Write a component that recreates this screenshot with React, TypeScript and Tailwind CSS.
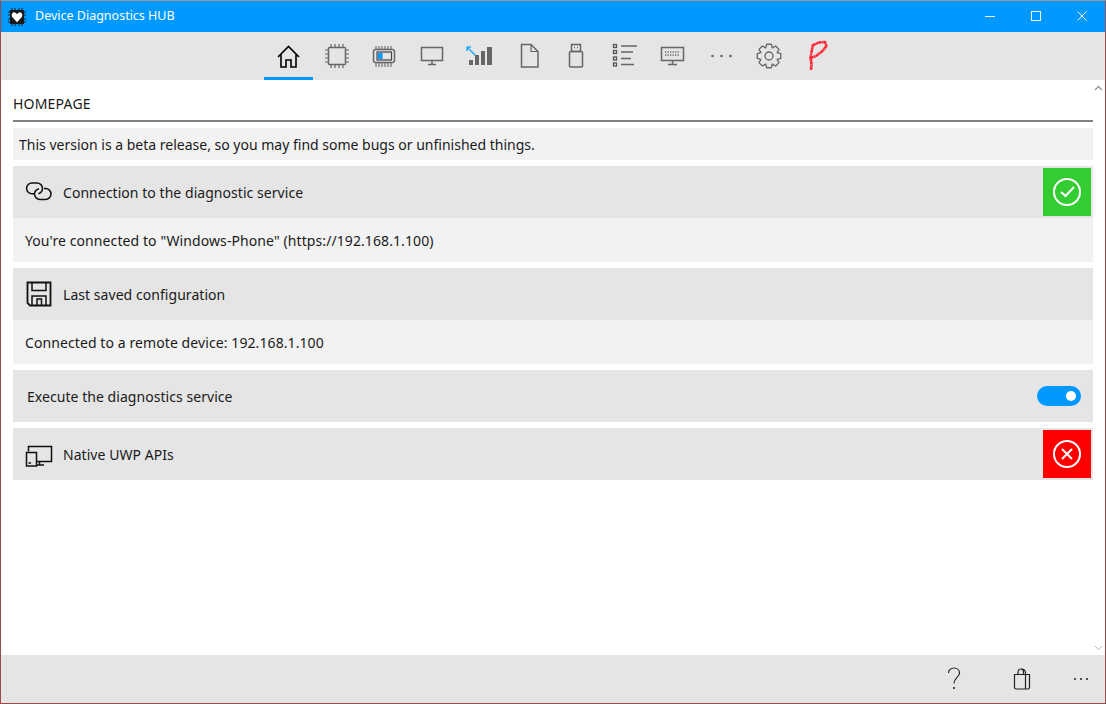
import type { ReactNode } from "react";

const font = "font-['Noto_Sans','Open_Sans',sans-serif]";

function gearPath(cx: number, cy: number) {
  const teeth = 8;
  const pts: string[] = [];
  for (let i = 0; i < teeth; i++) {
    const step = (Math.PI * 2) / teeth;
    const a = i * step - Math.PI / 2;
    const list: [number, number][] = [
      [a - 0.38, 8.8],
      [a - 0.2, 12],
      [a + 0.2, 12],
      [a + 0.38, 8.8],
    ];
    for (const [t, r] of list) {
      pts.push(`${(cx + Math.cos(t) * r).toFixed(2)} ${(cy + Math.sin(t) * r).toFixed(2)}`);
    }
  }
  return "M" + pts.join("L") + "Z";
}

function NavIcon({ children }: { children: ReactNode }) {
  return (
    <svg width="48" height="48" viewBox="0 0 48 48" fill="none" stroke="#666666" strokeWidth="1.5">
      {children}
    </svg>
  );
}

const navIcons: ReactNode[] = [
  <NavIcon key="home">
    <path d="M14 25L24.5 14.5L35 25" stroke="#000" strokeWidth="1.6" />
    <path d="M17 22.5V35H22V28H27V35H32V22.5" stroke="#000" strokeWidth="1.6" />
  </NavIcon>,
  <NavIcon key="cpu">
    <rect x="16.5" y="15.5" width="17" height="17" rx="1" />
    <path
      d="M19 12V15M23 12V15M27 12V15M31 12V15M19 33V36M23 33V36M27 33V36M31 33V36M13 18H16M13 22H16M13 26H16M13 30H16M34 18H37M34 22H37M34 26H37M34 30H37"
      strokeWidth="1.2"
    />
  </NavIcon>,
  <NavIcon key="memory">
    <rect x="13.5" y="17.5" width="21" height="13" rx="2" />
    <rect x="17" y="20" width="14.5" height="8" stroke="#444" strokeWidth="1.2" />
    <rect x="18" y="21" width="4.5" height="6" fill="#0099ff" stroke="none" />
    <path
      d="M16 14V17M19 14V17M22 14V17M25 14V17M28 14V17M31 14V17M16 31V35M19 31V35M22 31V35M25 31V35M28 31V35M31 31V35"
      strokeWidth="1.1"
    />
  </NavIcon>,
  <NavIcon key="monitor">
    <rect x="13.5" y="15.5" width="21" height="13" />
    <path d="M24 29V32M20 32.5H28" />
  </NavIcon>,
  <NavIcon key="signal">
    <path d="M11 15L20 24M11 15V19M11 15H15" stroke="#29a8ff" />
    <g fill="#666666" stroke="none">
      <rect x="13" y="28" width="4" height="5" />
      <rect x="19" y="23" width="4" height="10" />
      <rect x="25" y="19" width="4" height="14" />
      <rect x="31" y="15" width="5" height="18" />
    </g>
  </NavIcon>,
  <NavIcon key="file">
    <path d="M17.5 12.5H27L34 19.5V35H17.5Z" />
    <path d="M27 12.5V19.5H34" strokeWidth="1.2" />
  </NavIcon>,
  <NavIcon key="usb">
    <rect x="17.5" y="19.5" width="13" height="15.5" rx="1" />
    <rect x="19.5" y="12.5" width="9" height="7" />
    <path d="M22 15.5H23M25 15.5H26" strokeWidth="1.4" />
  </NavIcon>,
  <NavIcon key="list">
    <path d="M21 14H37M21 20H33M21 26.5H31M21 32.5H34" />
    <g fill="#e5e5e5" stroke="#555" strokeWidth="1.3">
      <rect x="13.5" y="12.5" width="3" height="3" />
      <rect x="13.5" y="18.5" width="3" height="3" />
      <rect x="13.5" y="25" width="3" height="3" />
      <rect x="13.5" y="31" width="3" height="3" />
    </g>
  </NavIcon>,
  <NavIcon key="keyboard">
    <rect x="13.5" y="15.5" width="22" height="13" />
    <path d="M24.5 29V32M20 32.5H29" />
    <path d="M17 20H32M17 23H32" strokeWidth="1.4" strokeDasharray="1.3 1.2" />
  </NavIcon>,
  <NavIcon key="more">
    <g fill="#666666" stroke="none">
      <circle cx="16.5" cy="24" r="1.3" />
      <circle cx="25.5" cy="24" r="1.3" />
      <circle cx="34.5" cy="24" r="1.3" />
    </g>
  </NavIcon>,
  <NavIcon key="settings">
    <path d={gearPath(25, 24)} strokeWidth="1.3" strokeLinejoin="round" />
    <circle cx="25" cy="24" r="4" strokeWidth="1.3" />
  </NavIcon>,
  <NavIcon key="logo">
    <path
      d="M21 12.5L19.5 20L18.5 26L19.5 32L19 38M21 13L27 10.5L33 10L34.5 14L30 19.5L24 24L17.5 26.5"
      stroke="#ff1a2a"
      strokeWidth="2.6"
      strokeLinejoin="round"
      strokeOpacity="0.95"
      strokeDasharray="3 0.4 2 0.3"
    />
  </NavIcon>,
];

function AppLogo() {
  return (
    <svg width="18" height="18" viewBox="0 0 18 18">
      <rect x="2" y="2" width="14" height="14" fill="#1a1a1a" />
      <path
        d="M4 0V2M7 0V2M11 0V2M14 0V2M4 16V18M7 16V18M11 16V18M14 16V18M0 4H2M0 7H2M0 11H2M0 14H2M16 4H18M16 7H18M16 11H18M16 14H18"
        stroke="#1a1a1a"
      />
      <path d="M9 14.2L4.2 9C2.8 6.8 4.6 4 6.7 4.4C7.8 4.6 8.6 5.3 9 6.2C9.4 5.3 10.2 4.6 11.3 4.4C13.4 4 15.2 6.8 13.8 9Z" fill="#fff" />
    </svg>
  );
}

function RowIcon({ children }: { children: ReactNode }) {
  return (
    <svg width="28" height="28" viewBox="0 0 28 28" fill="none" stroke="#111" strokeWidth="1.5" className="shrink-0 overflow-visible">
      {children}
    </svg>
  );
}

function Row({ icon, title, right }: { icon?: ReactNode; title: string; right?: ReactNode }) {
  return (
    <div className="flex h-[52px] items-center bg-[#e5e5e5] pr-[2px]">
      {icon ? <div className="ml-[11px] mr-[11px] flex">{icon}</div> : <div className="w-[14px]" />}
      <span className="flex-1 text-[14px] tracking-[0.05px] text-[#1a1a1a]">{title}</span>
      {right}
    </div>
  );
}

function Status({ color, children }: { color: string; children: ReactNode }) {
  return (
    <div className={`flex h-[48px] w-[48px] items-center justify-center ${color}`}>
      <svg width="28" height="28" viewBox="0 0 28 28" fill="none" stroke="#fff" strokeWidth="2">
        <circle cx="14" cy="14" r="13" />
        {children}
      </svg>
    </div>
  );
}

function Detail({ children }: { children: ReactNode }) {
  return (
    <div className="flex h-[44px] items-center bg-[#f2f2f2] px-[12px] text-[14px] tracking-[0.09px] text-[#1a1a1a]">
      {children}
    </div>
  );
}

export default function App() {
  return (
    <div className={`flex h-[704px] w-[1106px] flex-col overflow-hidden border-x border-b border-x-[#9c4a4a] border-b-[#9c4a4a] border-t border-t-[#9a9a9a] bg-white ${font}`}>
      {/* title bar */}
      <div className="flex h-[31px] shrink-0 items-center bg-[#0099ff] text-white">
        <div className="ml-[7px] flex">
          <AppLogo />
        </div>
        <span className="ml-[9px] flex-1 text-[12.5px]">Device Diagnostics HUB</span>
        <div className="flex">
          {[
            <path key="min" d="M1 5.5H11" />,
            <rect key="max" x="1.5" y="0.5" width="9" height="9" />,
            <path key="close" d="M1.5 0.5L10.5 9.5M10.5 0.5L1.5 9.5" />,
          ].map((shape, i) => (
            <div key={i} className="flex h-[31px] w-[46px] items-center justify-center">
              <svg width="12" height="11" viewBox="0 0 12 11" fill="none" stroke="#f0f0f0" strokeWidth="1">
                {shape}
              </svg>
            </div>
          ))}
        </div>
      </div>

      {/* nav */}
      <div className="flex h-[48px] shrink-0 justify-center bg-[#e5e5e5] pr-[2px]">
        {navIcons.map((icon, i) => (
          <div key={i} className="relative h-[48px] w-[48px]">
            {icon}
            {i === 0 && <div className="absolute bottom-0 left-0 h-[3px] w-[49px] bg-[#0099ff]" />}
          </div>
        ))}
      </div>

      {/* content */}
      <div className="relative flex-1 px-[12px]">
        <div className="flex h-[42px] items-end border-b-2 border-[#808080] pb-[6px] text-[14px] leading-[20px] tracking-[0.2px] text-[#1a1a1a]">
          HOMEPAGE
        </div>
        <div className="mt-[6px] flex flex-col gap-[6px]">
          <div className="flex h-[32px] items-center bg-[#f2f2f2] px-[6px] text-[14px] text-[#1a1a1a]">
            This version is a beta release, so you may find some bugs or unfinished things.
          </div>
          <div>
            <Row
              title="Connection to the diagnostic service"
              icon={
                <RowIcon>
                  <path d="M11 15.8H8A5.4 5.4 0 0 1 8 5H13A5.5 5.5 0 0 1 18.5 10.5C18.5 13 16.5 15 14.5 15.8" />
                  <path d="M20 10.5H21.5A5.5 5.5 0 0 1 21.5 21.5H16A5.5 5.5 0 0 1 10.5 16C10.5 13.5 12.5 11.5 15 10.8" />
                </RowIcon>
              }
              right={
                <Status color="bg-[#33cc33]">
                  <path d="M8 14L12.5 18L21 9" />
                </Status>
              }
            />
            <Detail>You're connected to "Windows-Phone" (https://192.168.1.100)</Detail>
          </div>
          <div>
            <Row
              title="Last saved configuration"
              icon={
                <RowIcon>
                  <path d="M3.5 2.5H26.5V25.5H6L3.5 23Z" strokeWidth="1.8" />
                  <path d="M8 2.5V10.5H22V2.5M8 25.5V16H22V25.5M13 25.5V19H17.5V25.5" />
                </RowIcon>
              }
            />
            <Detail>Connected to a remote device: 192.168.1.100</Detail>
          </div>
          <Row
            title="Execute the diagnostics service"
            right={
              <div className="mr-[10px] flex h-[20px] w-[44px] items-center justify-end rounded-full bg-[#0099ff] pr-[5px]">
                <div className="h-[10px] w-[10px] rounded-full bg-white" />
              </div>
            }
          />
          <Row
            title="Native UWP APIs"
            icon={
              <RowIcon>
                <path d="M4.5 11.5V6.5H27.5V21.5H12.5M15.5 21.5V25M12.5 25H20" />
                <rect x="2.5" y="12.5" width="10" height="13.5" />
                <path d="M4.5 23H7" />
              </RowIcon>
            }
            right={
              <Status color="bg-[#ff0000]">
                <path d="M9 9L19 19M19 9L9 19" />
              </Status>
            }
          />
        </div>

        {/* scroll arrows */}
        <svg className="absolute right-[2px] top-[5px]" width="9" height="6" viewBox="0 0 9 6" fill="none" stroke="#a0a0a0" strokeWidth="1.5">
          <path d="M1 5L4.5 1.5L8 5" />
        </svg>
        <svg className="absolute bottom-[4px] right-[2px]" width="9" height="6" viewBox="0 0 9 6" fill="none" stroke="#b4b4b4" strokeWidth="1">
          <path d="M1 1L4.5 4.5L8 1" />
        </svg>
      </div>

      {/* bottom bar */}
      <div className="flex h-[48px] shrink-0 items-center justify-end bg-[#e5e5e5]">
        <div className="flex h-[47px] w-[66px] items-center justify-center">
          <svg width="14" height="24" viewBox="0 0 14 24" fill="none" stroke="#222" strokeWidth="1.2">
            <path d="M1.5 6C1.5 3 4 1 7 1C10 1 12.5 3 12.5 6C12.5 10.5 7 10.5 7 16.5" />
            <path d="M7 20V22" strokeWidth="1.6" />
          </svg>
        </div>
        <div className="flex h-[47px] w-[70px] items-center justify-center">
          <svg width="20" height="22" viewBox="0 0 20 22" fill="none" stroke="#222" strokeWidth="1.2">
            <path d="M2.5 6.5H17.5V19.5C17.5 20.5 17 21 16 21H4C3 21 2.5 20.5 2.5 19.5Z" />
            <path d="M13.5 6.5V21M6 6.5V4C6 2.5 7.5 1 9 1C10.5 1 11.5 2.5 11.5 4V6.5M9 1.2C11 0.6 13.5 2 13.5 4.5V6.5" />
          </svg>
        </div>
        <div className="flex h-[47px] w-[48px] items-center justify-center">
          <svg width="16" height="4" viewBox="0 0 16 4" fill="#222">
            <circle cx="2" cy="2" r="1" />
            <circle cx="8" cy="2" r="1" />
            <circle cx="14" cy="2" r="1" />
          </svg>
        </div>
      </div>
    </div>
  );
}
